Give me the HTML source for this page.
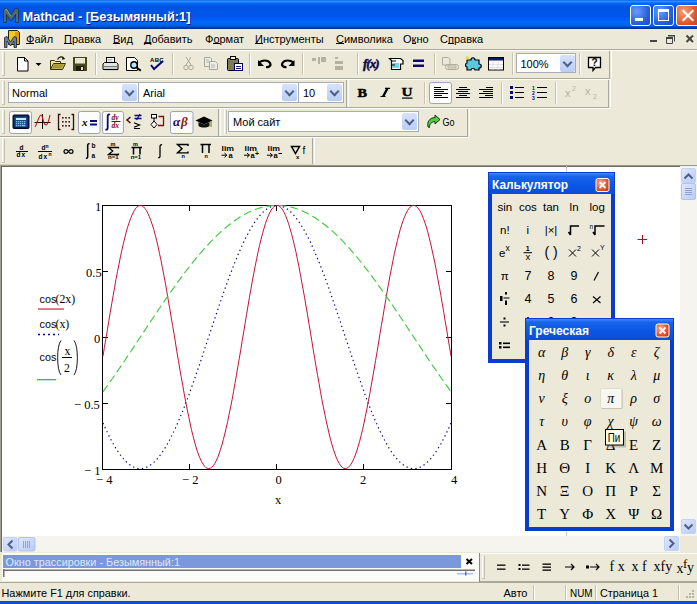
<!DOCTYPE html>
<html><head><meta charset="utf-8">
<style>
*{margin:0;padding:0;box-sizing:border-box}
html,body{width:697px;height:604px;overflow:hidden;background:#ECE9D8;font-family:"Liberation Sans",sans-serif;font-size:11px;color:#000}
.a{position:absolute}
svg{position:absolute;left:0;top:0;overflow:visible}
#title{left:0;top:0;width:697px;height:29px;background:linear-gradient(to bottom,#0058ee 0%,#3593ff 4%,#288eff 6%,#127dff 8%,#036ffc 10%,#0262ee 14%,#0057e5 20%,#0054e3 24%,#0055eb 56%,#005bf5 66%,#026afe 76%,#0062ef 86%,#0052d6 92%,#0040ab 94%,#003092 100%)}
#ttext{left:22.5px;top:9px;color:#fff;font-weight:bold;font-size:12.8px;white-space:nowrap;text-shadow:1px 1px 0 #0a1883}
.tb{top:5px;width:21px;height:21px;border:1px solid #fff;border-radius:3px;background:radial-gradient(circle at 30% 30%,#6a9cf8,#2a60e0 60%,#1a48c8)}
.mi{top:4px;white-space:nowrap;font-size:11px}
.u{position:relative}.u:after{content:"";position:absolute;left:0;right:0;top:9.5px;height:1px;background:#000}
.combo{background:#fff;border:1px solid #a5acb5}
.cbtn{position:absolute;width:15px;height:17px;background:linear-gradient(#d7e2fb,#b9cdf7);border-radius:2px}
.cbtn:after{content:"";position:absolute;left:4px;top:4px;width:5px;height:5px;border-right:2px solid #4d6185;border-bottom:2px solid #4d6185;transform:rotate(45deg)}
.ctext{position:absolute;white-space:nowrap;font-size:11px}
.pbtn{background:#fcfcfa;border:1px solid #a7a69c;border-radius:2px}
.serif{font-family:"Liberation Serif",serif}
.pal{background:#0b3ed8}
.pin{position:absolute;background:#ECE9D8}
.ptitle{position:absolute;left:0;top:0;right:0;height:22px;background:linear-gradient(#3a82f8,#1660ea 30%,#0c52e2 70%,#0a4ad8)}
.ptext{position:absolute;left:4px;top:5px;color:#fff;font-weight:bold;font-size:12px;white-space:nowrap}
.pclose{position:absolute;width:14px;height:13px;border:1px solid #fff;border-radius:2px;background:radial-gradient(circle at 35% 35%,#f0a080,#e05a30 60%,#c84418)}
.pclose:before,.pclose:after{content:"";position:absolute;left:5px;top:1px;width:2px;height:9px;background:#fff;transform:rotate(45deg)}
.pclose:after{transform:rotate(-45deg)}
.c{position:absolute;width:23px;height:23px;text-align:center;line-height:23px;font-size:13px;white-space:nowrap}
.g{font-family:"Liberation Serif",serif;font-style:italic;font-size:14px}
.G{font-family:"Liberation Serif",serif;font-size:15px}
.st{top:5px;font-size:11px;white-space:nowrap}
</style></head><body>
<!-- TITLE -->
<div id="title" class="a">
  <svg width="24" height="29"><path d="M3.5 22.5v-13l3-1.5l4.5 7l4.5-7l3 1.5v13h-3v-8l-4.5 6.5l-4.5-6.5v8z" fill="#4e6a72" stroke="#1e3038" stroke-width="0.8"/><path d="M5 10l1.5-0.8 4.5 7" stroke="#9ab0b8" stroke-width="0.8" fill="none"/></svg>
  <div id="ttext" class="a">Mathcad - [Безымянный:1]</div>
  <div class="a tb" style="left:630px"><div class="a" style="left:4px;top:12px;width:8px;height:3px;background:#fff"></div></div>
  <div class="a tb" style="left:653px"><div class="a" style="left:4px;top:3px;width:11px;height:12px;border:1px solid #fff;border-top-width:3px"></div></div>
  <div class="a tb" style="left:676px;width:24px;background:radial-gradient(circle at 30% 30%,#f3a07a,#e0552a 60%,#c8401a)"><div class="a" style="left:10px;top:2px;width:2px;height:15px;background:#fff;transform:rotate(45deg)"></div><div class="a" style="left:10px;top:2px;width:2px;height:15px;background:#fff;transform:rotate(-45deg)"></div></div>
</div>
<!-- MENU -->
<div class="a" style="left:0;top:29px;width:697px;height:20px;background:#ECE9D8">
  <svg width="24" height="20"><rect x="0" y="0" width="22" height="20" fill="#f4f2ea"/><path d="M8.5 1.5h9l2 2v12h-11z" fill="#f6c81a" stroke="#2a2000"/><rect x="15" y="3" width="4" height="12" fill="#e39a10"/><path d="M4.5 18.5v-10l2.5-1l3.5 5.5l3.5-5.5l2.5 1v10h-2.5v-6.5l-3.5 5l-3.5-5v6.5z" fill="#6f8090" stroke="#1a2430" stroke-width="0.8"/></svg>
  <div class="a mi" style="left:26px"><span class="u">Ф</span>айл</div>
  <div class="a mi" style="left:64px"><span class="u">П</span>равка</div>
  <div class="a mi" style="left:113px"><span class="u">В</span>ид</div>
  <div class="a mi" style="left:144px"><span class="u">Д</span>обавить</div>
  <div class="a mi" style="left:205px">Ф<span class="u">о</span>рмат</div>
  <div class="a mi" style="left:255px"><span class="u">И</span>нструменты</div>
  <div class="a mi" style="left:336px"><span class="u">С</span>имволика</div>
  <div class="a mi" style="left:403px">О<span class="u">к</span>но</div>
  <div class="a mi" style="left:440px">С<span class="u">п</span>равка</div>
  <svg width="697" height="20">
    <rect x="650" y="11" width="7" height="2" fill="#444"/>
    <path d="M666.5 8.5h6v6h-6z M668.5 6.5h6v6" fill="none" stroke="#444" stroke-width="1"/><path d="M666 8h7v2h-7z M668 6h7v1.5h-7z" fill="#444"/>
    <path d="M686.5 6.5l6.5 6.5M693 6.5l-6.5 6.5" stroke="#444" stroke-width="2"/>
  </svg>
</div>
<svg width="697" height="604" style="font-family:'Liberation Sans',sans-serif">
 <!-- etched band lines -->
 <g shape-rendering="crispEdges">
  <rect x="0" y="49" width="697" height="1" fill="#aca899"/>
  <rect x="0" y="50" width="697" height="1" fill="#fff"/>
  <rect x="0" y="78" width="610" height="1" fill="#aca899"/>
  <rect x="0" y="79" width="611" height="1" fill="#fff"/>
  <rect x="0" y="107" width="609" height="1" fill="#aca899"/>
  <rect x="0" y="108" width="610" height="1" fill="#fff"/>
  <rect x="0" y="136" width="468" height="1" fill="#aca899"/>
  <rect x="0" y="137" width="469" height="1" fill="#fff"/>
  <rect x="0" y="164" width="314" height="1" fill="#d8d4c4"/>
  <!-- band right edges -->
  <rect x="609" y="51" width="1" height="27" fill="#aca899"/><rect x="611" y="51" width="1" height="27" fill="#fff"/>
  <rect x="608" y="80" width="1" height="27" fill="#aca899"/><rect x="610" y="80" width="1" height="27" fill="#fff"/>
  <rect x="467" y="109" width="1" height="27" fill="#aca899"/><rect x="469" y="109" width="1" height="27" fill="#fff"/>
  <rect x="312" y="138" width="1" height="26" fill="#aca899"/><rect x="314" y="138" width="1" height="26" fill="#fff"/>
  <rect x="218" y="109" width="1" height="27" fill="#aca899"/><rect x="220" y="109" width="1" height="27" fill="#fff"/>
  <rect x="346" y="80" width="1" height="27" fill="#aca899"/><rect x="348" y="80" width="1" height="27" fill="#fff"/>
  <!-- grips -->
  <rect x="2" y="52" width="1" height="24" fill="#fff"/><rect x="4" y="52" width="1" height="24" fill="#c5c1ad"/><rect x="2" y="75" width="3" height="1" fill="#c5c1ad"/>
  <rect x="2" y="81" width="1" height="24" fill="#fff"/><rect x="4" y="81" width="1" height="24" fill="#c5c1ad"/><rect x="2" y="104" width="3" height="1" fill="#c5c1ad"/>
  <rect x="2" y="110" width="1" height="24" fill="#fff"/><rect x="4" y="110" width="1" height="24" fill="#c5c1ad"/><rect x="2" y="133" width="3" height="1" fill="#c5c1ad"/>
  <rect x="2" y="139" width="1" height="24" fill="#fff"/><rect x="4" y="139" width="1" height="24" fill="#c5c1ad"/><rect x="2" y="162" width="3" height="1" fill="#c5c1ad"/>
  <rect x="224" y="110" width="1" height="24" fill="#fff"/><rect x="226" y="110" width="1" height="24" fill="#c5c1ad"/>
  <rect x="482" y="555" width="1" height="24" fill="#fff"/><rect x="484" y="555" width="1" height="24" fill="#c5c1ad"/>
  <!-- separators band1 -->
  <g fill="#c5c1ad"><rect x="95" y="53" width="1" height="22"/><rect x="172" y="53" width="1" height="22"/><rect x="249" y="53" width="1" height="22"/><rect x="302" y="53" width="1" height="22"/><rect x="357" y="53" width="1" height="22"/><rect x="434" y="53" width="1" height="22"/><rect x="512" y="53" width="1" height="22"/><rect x="579" y="53" width="1" height="22"/>
  <rect x="424" y="82" width="1" height="22"/><rect x="501" y="82" width="1" height="22"/><rect x="555" y="82" width="1" height="22"/></g>
  <g fill="#fff"><rect x="96" y="53" width="1" height="22"/><rect x="173" y="53" width="1" height="22"/><rect x="250" y="53" width="1" height="22"/><rect x="303" y="53" width="1" height="22"/><rect x="358" y="53" width="1" height="22"/><rect x="435" y="53" width="1" height="22"/><rect x="513" y="53" width="1" height="22"/><rect x="580" y="53" width="1" height="22"/>
  <rect x="425" y="82" width="1" height="22"/><rect x="502" y="82" width="1" height="22"/><rect x="556" y="82" width="1" height="22"/></g>
 </g>

 <!-- ===== BAND 1 ICONS ===== -->
 <!-- new -->
 <path d="M17.5 57.5h7l3.5 3.5v10h-10.5z" fill="#fff" stroke="#000"/><path d="M24.5 57.5v3.5h3.5" fill="none" stroke="#000"/>
 <path d="M35.5 63h6l-3 3z" fill="#000"/>
 <!-- open -->
 <path d="M50.5 69.5v-9h4l1 1h5v2" fill="#f0e8a0" stroke="#3a3410"/>
 <path d="M50.5 69.5l3-6h12l-3 6z" fill="#d8c860" stroke="#3a3410"/>
 <path d="M51.8 68.6l2.3-4.3h10l-2.3 4.3z" fill="#a89838"/>
 <path d="M57.5 59.5c1.5-3 4.5-3.5 6.5-1" fill="none" stroke="#1a1a08" stroke-width="1.2"/><path d="M62.5 56.2l2.8 2.8-3.3 0.8z" fill="#1a1a08"/>
 <!-- save -->
 <rect x="73" y="57" width="14" height="14" fill="#474720"/>
 <rect x="75" y="58" width="10" height="5.5" fill="#e9e6d0"/>
 <rect x="76" y="66" width="8" height="5" fill="#1c1c08"/><rect x="81" y="67" width="2" height="3" fill="#e0e0d0"/>
 <!-- print -->
 <rect x="106.5" y="57.5" width="8" height="5" fill="#fff" stroke="#000"/>
 <path d="M107.5 59.5h5M107.5 61h5" stroke="#888" stroke-width="0.6"/>
 <path d="M104.5 62.5h12l1.5 1.5v5.5h-15v-5.5z" fill="#e4e4e4" stroke="#000"/>
 <rect x="104" y="66" width="13.5" height="1.2" fill="#777"/><path d="M104.5 69.5h13.5" stroke="#000" stroke-width="1.2"/>
 <!-- preview -->
 <path d="M126.5 57.5h8l3 3v10h-11z" fill="#fff" stroke="#000"/>
 <circle cx="134" cy="65" r="3.2" fill="#b8e0f0" stroke="#000" stroke-width="1.4"/><path d="M136.3 67.3l4.5 3.5" stroke="#000" stroke-width="2"/>
 <!-- spell -->
 <text x="150" y="62" font-size="6" font-weight="bold" fill="#000" letter-spacing="0.3">ABC</text>
 <path d="M151 65l3 4 9-8" fill="none" stroke="#000080" stroke-width="2"/>
 <!-- cut grey -->
 <g fill="none" stroke="#a9a898" stroke-width="1"><path d="M186 57l5 8M191 57l-5 8"/><circle cx="186" cy="67.5" r="2.2"/><circle cx="191" cy="67.5" r="2.2"/></g>
 <!-- copy grey -->
 <g fill="#ecebe4" stroke="#a9a898"><path d="M204.5 57.5h6l1 1v8h-7z"/><path d="M209.5 61.5h6l2 2v6h-8z"/></g>
 <g stroke="#b9b8a8"><path d="M206 60h3M206 62h3M211 65h4M211 67h4"/></g>
 <!-- paste -->
 <rect x="227.5" y="58.5" width="11" height="12" rx="1" fill="#7e7a5c" stroke="#000"/>
 <rect x="230.5" y="56.5" width="5" height="3" fill="#f8f4c0" stroke="#000"/>
 <rect x="234.5" y="63.5" width="8" height="7" fill="#fff" stroke="#000060"/><path d="M236 66.5h5M236 68.5h5" stroke="#000060" stroke-width="0.9"/>
 <!-- undo / redo -->
 <path d="M259 62.5c3-2.5 9-3 11 0.5c1.5 2.5-1 4.5-4 4" fill="none" stroke="#000" stroke-width="2.2"/><path d="M258 60v6h6z" fill="#000"/>
 <path d="M293.5 62.5c-3-2.5-9-3-11 0.5c-1.5 2.5 1 4.5 4 4" fill="none" stroke="#000" stroke-width="2.2"/><path d="M294.5 60v6h-6z" fill="#000"/>
 <!-- grey align icons -->
 <g fill="#b3b1a2"><rect x="312" y="58" width="4" height="3"/><rect x="318" y="57" width="2" height="7"/><rect x="321" y="57" width="5" height="5"/>
 <rect x="335" y="57" width="3" height="2"/><rect x="335" y="61" width="8" height="3"/><rect x="335" y="66" width="8" height="4"/></g>
 <!-- f(x) -->
 <text x="363" y="68" font-family="Liberation Serif" font-style="italic" font-weight="bold" font-size="13" fill="#0a0a50" stroke="#0a0a50" stroke-width="0.5" letter-spacing="-1">f(x)</text>
 <!-- beaker -->
 <path d="M389.5 58.5h11l2.5 2v3.5l-2.5 0v5.5h-9v-9z" fill="#fff" stroke="#000" stroke-width="1.2"/>
 <rect x="392" y="63" width="7" height="5" fill="#7ad0e8"/><path d="M392 61h4M392 65h3" stroke="#000"/>
 <!-- = -->
 <rect x="413" y="59.5" width="11" height="2.5" fill="#0a0a70"/><rect x="413" y="64.5" width="11" height="2.5" fill="#0a0a70"/>
 <!-- grey component -->
 <g fill="none" stroke="#aeac9c"><path d="M442.5 57.5h6l1.5 1.5v6h-7.5z"/><rect x="445.5" y="64.5" width="13" height="5" rx="2"/><rect x="448" y="66" width="8" height="2"/></g>
 <!-- puzzle -->
 <path d="M467 60h4c0-3 4-3 4 0h4v4c3 0 3 4 0 4v2h-4c0-2-4-2-4 0h-4v-3c-2 0-2-4 0-4z" fill="#5cc8e0" stroke="#000" stroke-width="1.2"/>
 <path d="M466 57l1 3M468 56v3" stroke="#e8d030" stroke-width="1.3"/>
 <!-- window -->
 <rect x="488.5" y="57.5" width="15" height="12.5" fill="#fff" stroke="#000"/><rect x="489" y="58" width="14" height="2.5" fill="#0a1a6a"/>
 <path d="M489 64.5h14M489 67.5h14M493 61v9M498 61v9" stroke="#d8d8e8" stroke-width="0.8"/>
 <!-- help -->
 <path d="M588.5 57.5h12v10h-5l-2.5 3v-3h-4.5z" fill="#fffff4" stroke="#000" stroke-width="1.3"/>
 <text x="591.5" y="66" font-size="10" font-weight="bold" fill="#000">?</text>

 <!-- ===== BAND 2 ICONS ===== -->
 <text x="357.5" y="96.8" font-family="Liberation Serif" font-weight="bold" font-size="13" fill="#000" stroke="#000" stroke-width="0.5" textLength="9.5" lengthAdjust="spacingAndGlyphs">B</text>
 <path d="M385 88.3h5M380.5 96.5h5M388 88.3l-4.5 8.2" stroke="#000" stroke-width="1.2" fill="none"/><path d="M387.5 88.3l-4.5 8.2" stroke="#000" stroke-width="2.2"/>
 <text x="401.5" y="96" font-family="Liberation Serif" font-weight="bold" font-size="12" fill="#000" stroke="#000" stroke-width="0.4" textLength="11" lengthAdjust="spacingAndGlyphs">U</text>
 <rect x="402" y="97.5" width="10.5" height="1.2" fill="#000"/>
 <rect x="429.5" y="82.5" width="22" height="21" rx="2" fill="#fcfcfa" stroke="#9ea4b8"/>
 <g fill="#000">
  <rect x="434" y="87" width="7" height="1"/><rect x="434" y="89" width="14" height="1"/><rect x="434" y="91" width="10" height="1"/><rect x="434" y="93" width="14" height="1"/><rect x="434" y="95" width="8" height="1"/><rect x="434" y="97" width="14" height="1"/>
  <rect x="459" y="87" width="8" height="1"/><rect x="456" y="89" width="14" height="1"/><rect x="458" y="91" width="10" height="1"/><rect x="456" y="93" width="14" height="1"/><rect x="459" y="95" width="8" height="1"/><rect x="456" y="97" width="14" height="1"/>
  <rect x="486" y="87" width="7" height="1"/><rect x="479" y="89" width="14" height="1"/><rect x="483" y="91" width="10" height="1"/><rect x="479" y="93" width="14" height="1"/><rect x="485" y="95" width="8" height="1"/><rect x="479" y="97" width="14" height="1"/>
 </g>
 <g fill="#0a0a6a"><rect x="510" y="86" width="3" height="3"/><rect x="510" y="91" width="3" height="3"/><rect x="510" y="96" width="3" height="3"/></g>
 <g fill="#000"><rect x="515" y="87" width="9" height="1"/><rect x="515" y="92" width="9" height="1"/><rect x="515" y="97" width="9" height="1"/>
 <rect x="537" y="87" width="10" height="1"/><rect x="537" y="92" width="10" height="1"/><rect x="537" y="97" width="10" height="1"/></g>
 <text x="532" y="90" font-size="5" font-weight="bold" fill="#0a0a6a">1</text><text x="532" y="95" font-size="5" font-weight="bold" fill="#0a0a6a">2</text><text x="532" y="100" font-size="5" font-weight="bold" fill="#0a0a6a">3</text>
 <text x="565" y="97" font-size="11" fill="#b5b3a5">x</text><text x="572" y="91" font-size="7" fill="#b5b3a5">2</text>
 <text x="585" y="95" font-size="11" fill="#b5b3a5">x</text><text x="593" y="99" font-size="7" fill="#b5b3a5">2</text>

 <!-- ===== BAND 3 ICONS ===== -->
 <rect x="9.5" y="111.5" width="22" height="22" rx="2" fill="#fcfcfa" stroke="#9ea4b8"/>
 <rect x="13" y="115" width="16" height="13.5" rx="1" fill="#081c50" stroke="#030a28"/>
 <rect x="14.5" y="116.5" width="13" height="10.5" fill="#1a4c84"/>
 <rect x="16" y="118" width="10" height="2" fill="#c8ecf4"/>
 <g fill="#70c8d8"><rect x="16" y="121" width="1.3" height="1.3"/><rect x="18" y="121" width="1.3" height="1.3"/><rect x="20" y="121" width="1.3" height="1.3"/><rect x="22" y="121" width="1.3" height="1.3"/><rect x="24" y="121" width="1.3" height="1.3"/>
 <rect x="16" y="123" width="1.3" height="1.3"/><rect x="18" y="123" width="1.3" height="1.3"/><rect x="20" y="123" width="1.3" height="1.3"/><rect x="22" y="123" width="1.3" height="1.3"/><rect x="24" y="123" width="1.3" height="1.3"/>
 <rect x="16" y="125" width="1.3" height="1.3"/><rect x="18" y="125" width="1.3" height="1.3"/><rect x="20" y="125" width="1.3" height="1.3"/><rect x="22" y="125" width="3.3" height="1.3"/></g>
 <!-- graph -->
 <path d="M34.5 122.5h16M42.5 114v15" stroke="#000" stroke-width="1"/>
 <path d="M35 127c2-3 4-12 6-12c2 0 2 10 5 10c2 0 3-6 4-10" fill="none" stroke="#d01818" stroke-width="1.1"/>
 <!-- matrix -->
 <path d="M60.5 114.5h-2v15h2M71.5 114.5h2v15h-2" fill="none" stroke="#301010" stroke-width="1.3"/>
 <g fill="#401010"><rect x="62" y="117" width="1.6" height="1.6"/><rect x="65.2" y="117" width="1.6" height="1.6"/><rect x="68.4" y="117" width="1.6" height="1.6"/><rect x="62" y="121" width="1.6" height="1.6"/><rect x="65.2" y="121" width="1.6" height="1.6"/><rect x="68.4" y="121" width="1.6" height="1.6"/><rect x="62" y="125" width="1.6" height="1.6"/><rect x="65.2" y="125" width="1.6" height="1.6"/><rect x="68.4" y="125" width="1.6" height="1.6"/></g>
 <!-- x= -->
 <rect x="78.5" y="111.5" width="21.5" height="22" rx="2" fill="#fcfcfa" stroke="#9ea4b8"/>
 <text x="82" y="125.5" font-family="Liberation Serif" font-style="italic" font-weight="bold" font-size="11" fill="#000">x</text>
 <rect x="90" y="120" width="7" height="2" fill="#0a0a70"/><rect x="90" y="123.5" width="7" height="2" fill="#0a0a70"/>
 <!-- integral -->
 <rect x="102.5" y="111.5" width="21" height="22" rx="2" fill="#fcfcfa" stroke="#9ea4b8"/>
 <path d="M110 114.8c-1.2-0.8-2.3-0.2-2.3 1.5v11.5c0 1.7-1 2.3-2.2 1.5" fill="none" stroke="#0a0a70" stroke-width="1.8"/>
 <text x="111.5" y="120.3" font-family="Liberation Serif" font-style="italic" font-weight="bold" font-size="7.5" fill="#800a0a">dy</text>
 <rect x="111.5" y="121" width="9" height="1" fill="#800a0a"/>
 <text x="111.5" y="127.8" font-family="Liberation Serif" font-style="italic" font-weight="bold" font-size="7.5" fill="#800a0a">dx</text>
 <!-- relational -->
 <path d="M130.5 117l-3.5 3l3.5 3" fill="none" stroke="#401010" stroke-width="1.5"/>
 <path d="M134.5 115.5h7M134.5 118.5h7" stroke="#0a0a70" stroke-width="1.6"/><path d="M140 114l-3.5 6" stroke="#0a0a70" stroke-width="1.1"/>
 <path d="M134 122.8l5.5 2.2l-5.5 2.2M134 128.5h6" fill="none" stroke="#000" stroke-width="1.2"/>
 <!-- programming -->
 <rect x="151.5" y="114.5" width="5" height="3.5" fill="#fff" stroke="#000"/>
 <path d="M154 118v3" stroke="#000"/><path d="M154 121l3 3.5l-3 3.5l-3-3.5z" fill="#fff" stroke="#000"/>
 <path d="M158 125.5h5.5v-9h-5" fill="none" stroke="#801010" stroke-width="1.3"/>
 <!-- alpha beta -->
 <rect x="170.5" y="111.5" width="22.5" height="22" rx="2" fill="#fcfcfa" stroke="#9ea4b8"/>
 <text x="173" y="126" font-family="Liberation Serif" font-style="italic" font-weight="bold" font-size="13" fill="#0a0a70">α</text>
 <text x="181" y="126" font-family="Liberation Serif" font-style="italic" font-weight="bold" font-size="13" fill="#a01010">β</text>
 <!-- cap -->
 <path d="M195.5 120.5l8.5-4l8.5 4l-8.5 4z" fill="#000"/><path d="M198.5 122v4c3 2 8 2 11 0v-4l-5.5 2.5z" fill="#111"/>
 <path d="M211 121v6" stroke="#8a8a20" stroke-width="1.2"/>
 <!-- site combo -->
 <!-- Go -->
 <path d="M428 127c-1-5 1-9 7-9.5v-2.5l5 4.5l-5 4.5v-2.5c-4 0.5-5.5 2.5-5.5 6z" fill="#58c848" stroke="#0a3a08" stroke-width="1"/>
 <text x="442.5" y="126.3" font-size="10.5" fill="#000" textLength="12" lengthAdjust="spacingAndGlyphs">Go</text>

 <!-- ===== BAND 4 ICONS ===== -->
 <g font-family="Liberation Sans" font-weight="bold" fill="#000" font-size="6.5">
  <text x="19.5" y="150">d</text><rect x="16" y="151" width="12" height="1"/><text x="16.5" y="157.3">d</text><text x="21.5" y="157.3">x</text>
  <text x="41.5" y="150">d</text><text x="45.5" y="147.5" font-size="5">n</text><rect x="38" y="151" width="14" height="1"/><text x="38.5" y="158.5">d</text><text x="43.5" y="158.5">x</text><text x="48.5" y="155.5" font-size="5">n</text>
  <text x="91.5" y="148.2" font-size="6.5">b</text><text x="91.5" y="157.8" font-size="6.5">a</text>
  <text x="110.5" y="145.6" font-size="5.5">m</text><text x="108" y="158.8" font-size="5.5" textLength="10.5" lengthAdjust="spacingAndGlyphs">n=1</text>
  <text x="133" y="145.6" font-size="5.5">m</text><text x="130.7" y="158.8" font-size="5.5" textLength="10.5" lengthAdjust="spacingAndGlyphs">n=1</text>
  <text x="181.5" y="157.5" font-size="5.5">n</text>
  <text x="204.5" y="157.5" font-size="5.5">n</text>
  <text x="221.5" y="150.5" font-size="7.5" textLength="12.5" lengthAdjust="spacingAndGlyphs">lim</text><text x="228.5" y="157.8" font-size="7.5">a</text>
  <text x="244.5" y="150.5" font-size="7.5" textLength="12.5" lengthAdjust="spacingAndGlyphs">lim</text><text x="250.5" y="157.8" font-size="7.5">a</text><text x="255" y="155.5" font-size="7">+</text>
  <text x="267.5" y="150.5" font-size="7.5" textLength="12.5" lengthAdjust="spacingAndGlyphs">lim</text><text x="273.5" y="157.8" font-size="7.5">a</text><rect x="278.5" y="153" width="3.5" height="1"/>
  <text x="302.5" y="153.5" font-size="10" font-weight="normal">f</text><text x="296" y="158.5" font-size="6">x</text>
 </g>
 <path d="M64 151.5c0-2.5 3-2.5 4.5 0c1.5 2.5 4.5 2.5 4.5 0c0-2.5-3-2.5-4.5 0c-1.5 2.5-4.5 2.5-4.5 0z" fill="none" stroke="#000" stroke-width="1.3"/>
 <path d="M89.5 144c-1-0.6-1.8 0-1.8 1.5v11c0 1.5-0.7 2-1.7 1.5" fill="none" stroke="#000" stroke-width="1.5"/>
 <path d="M118.5 148.5v-1h-10l4.2 3.5l-4.2 3.5h10v-1" fill="none" stroke="#000" stroke-width="1.3"/>
 <path d="M131.5 147.5h10.5M133.5 147.5v7M140 147.5v7" fill="none" stroke="#000" stroke-width="1.5"/>
 <path d="M162 145c-1-0.7-2 0-2 1.5v9.5c0 1.5-0.8 2-1.8 1.5" fill="none" stroke="#000" stroke-width="1.3"/>
 <path d="M188 146v-1.5h-10.5l4.5 4.2l-4.5 4.2h10.5v-1.5" fill="none" stroke="#000" stroke-width="1.4"/>
 <path d="M200.5 144.5h10.5M202.5 144.5v8.5M209 144.5v8.5" fill="none" stroke="#000" stroke-width="1.5"/>
 <path d="M291.5 146.5h8l-4 7z" fill="none" stroke="#000" stroke-width="1.5"/><path d="M221.5 155.2h5.5M224.5 153l2.3 2.2l-2.3 2.2M244 155.2h5.5M247 153l2.3 2.2l-2.3 2.2M267 155.2h5.5M270 153l2.3 2.2l-2.3 2.2" fill="none" stroke="#000" stroke-width="1"/>
</svg>
<div class="a combo" style="left:516px;top:53px;width:60px;height:20px"><div class="ctext" style="left:3.5px;top:4px;font-size:11px">100%</div><div class="cbtn" style="left:43px;top:1px"></div></div>
<div class="a combo" style="left:8px;top:82px;width:131px;height:21px"><div class="ctext" style="left:3px;top:4px">Normal</div><div class="cbtn" style="left:113px;top:1px"></div></div>
<div class="a combo" style="left:138px;top:82px;width:161px;height:21px"><div class="ctext" style="left:4px;top:4px">Arial</div><div class="cbtn" style="left:143px;top:1px"></div></div>
<div class="a combo" style="left:298px;top:82px;width:46px;height:21px"><div class="ctext" style="left:4px;top:4px">10</div><div class="cbtn" style="left:28px;top:1px"></div></div>
<div class="a combo" style="left:228px;top:111px;width:191px;height:21px"><div class="ctext" style="left:4px;top:4px">Мой сайт</div><div class="cbtn" style="left:173px;top:1px"></div></div>

<div class="a" style="left:0;top:165px;width:697px;height:1px;background:#9a978a"></div><div class="a" style="left:0;top:166px;width:680px;height:1px;background:#716f64"></div>
<div class="a" style="left:0;top:166px;width:1px;height:386px;background:#a2a199"></div><div class="a" style="left:1px;top:166px;width:1px;height:386px;background:#666660"></div>
<div class="a" style="left:2px;top:167px;width:678px;height:369px;background:#fff"></div>
<svg width="697" height="604">
 <g shape-rendering="crispEdges" fill="#000">
  <rect x="103" y="205" width="349" height="1"/>
  <rect x="103" y="469" width="349" height="1"/>
  <rect x="102" y="205" width="1" height="265"/>
  <rect x="451" y="205" width="1" height="265"/>
  <!-- ticks -->
  <rect x="189" y="206" width="1" height="5"/><rect x="276" y="206" width="1" height="5"/><rect x="363" y="206" width="1" height="5"/>
  <rect x="189" y="464" width="1" height="5"/><rect x="276" y="464" width="1" height="5"/><rect x="363" y="464" width="1" height="5"/>
  <rect x="103" y="271" width="5" height="1"/><rect x="103" y="337" width="5" height="1"/><rect x="103" y="403" width="5" height="1"/>
  <rect x="446" y="271" width="5" height="1"/><rect x="446" y="337" width="5" height="1"/><rect x="446" y="403" width="5" height="1"/>
 </g>
 <path d="M103.0 356.1 104.4 347.4 105.9 338.7 107.4 329.9 108.8 321.2 110.2 312.5 111.7 303.9 113.2 295.5 114.6 287.3 116.0 279.3 117.5 271.5 119.0 264.1 120.4 256.9 121.9 250.2 123.3 243.8 124.8 237.8 126.2 232.2 127.6 227.2 129.1 222.6 130.6 218.5 132.0 215.0 133.5 211.9 134.9 209.5 136.3 207.6 137.8 206.3 139.2 205.6 140.7 205.4 142.2 205.9 143.6 206.9 145.1 208.5 146.5 210.6 147.9 213.4 149.4 216.7 150.8 220.5 152.3 224.8 153.8 229.6 155.2 234.9 156.7 240.7 158.1 246.9 159.5 253.5 161.0 260.4 162.4 267.7 163.9 275.3 165.4 283.2 166.8 291.3 168.2 299.7 169.7 308.2 171.1 316.8 172.6 325.5 174.1 334.2 175.5 343.0 176.9 351.8 178.4 360.4 179.8 369.0 181.3 377.4 182.8 385.7 184.2 393.7 185.6 401.5 187.1 409.0 188.6 416.2 190.0 423.0 191.4 429.5 192.9 435.5 194.4 441.1 195.8 446.2 197.2 450.9 198.7 455.0 200.2 458.6 201.6 461.7 203.1 464.2 204.5 466.2 205.9 467.6 207.4 468.4 208.8 468.6 210.3 468.2 211.8 467.3 213.2 465.8 214.7 463.7 216.1 461.0 217.6 457.8 219.0 454.0 220.4 449.8 221.9 445.0 223.3 439.7 224.8 434.0 226.2 427.9 227.7 421.4 229.1 414.4 230.6 407.2 232.1 399.6 233.5 391.8 234.9 383.7 236.4 375.4 237.8 366.9 239.3 358.3 240.8 349.6 242.2 340.8 243.7 332.1 245.1 323.3 246.5 314.6 248.0 306.0 249.4 297.6 250.9 289.3 252.3 281.2 253.8 273.4 255.2 265.9 256.7 258.7 258.1 251.8 259.6 245.3 261.1 239.2 262.5 233.6 264.0 228.4 265.4 223.7 266.9 219.5 268.3 215.8 269.8 212.6 271.2 210.1 272.6 208.0 274.1 206.6 275.6 205.7 277.0 205.4 278.4 205.7 279.9 206.6 281.4 208.0 282.8 210.1 284.2 212.6 285.7 215.8 287.1 219.5 288.6 223.7 290.0 228.4 291.5 233.6 292.9 239.2 294.4 245.3 295.9 251.8 297.3 258.7 298.8 265.9 300.2 273.4 301.6 281.2 303.1 289.3 304.6 297.6 306.0 306.0 307.5 314.6 308.9 323.3 310.4 332.1 311.8 340.8 313.2 349.6 314.7 358.3 316.1 366.9 317.6 375.4 319.1 383.7 320.5 391.8 321.9 399.6 323.4 407.2 324.9 414.4 326.3 421.4 327.8 427.9 329.2 434.0 330.6 439.7 332.1 445.0 333.5 449.8 335.0 454.0 336.4 457.8 337.9 461.0 339.4 463.7 340.8 465.8 342.2 467.3 343.7 468.2 345.1 468.6 346.6 468.4 348.1 467.6 349.5 466.2 351.0 464.2 352.4 461.7 353.9 458.6 355.3 455.0 356.8 450.9 358.2 446.2 359.7 441.1 361.1 435.5 362.6 429.5 364.0 423.0 365.4 416.2 366.9 409.0 368.3 401.5 369.8 393.7 371.2 385.7 372.7 377.4 374.1 369.0 375.6 360.4 377.1 351.8 378.5 343.0 379.9 334.2 381.4 325.5 382.9 316.8 384.3 308.2 385.8 299.7 387.2 291.3 388.6 283.2 390.1 275.3 391.6 267.7 393.0 260.4 394.4 253.5 395.9 246.9 397.4 240.7 398.8 234.9 400.2 229.6 401.7 224.8 403.2 220.5 404.6 216.7 406.1 213.4 407.5 210.6 408.9 208.5 410.4 206.9 411.8 205.9 413.3 205.4 414.8 205.6 416.2 206.3 417.6 207.6 419.1 209.5 420.6 211.9 422.0 215.0 423.4 218.5 424.9 222.6 426.4 227.2 427.8 232.2 429.2 237.8 430.7 243.8 432.1 250.2 433.6 256.9 435.1 264.1 436.5 271.5 437.9 279.3 439.4 287.3 440.9 295.5 442.3 303.9 443.8 312.5 445.2 321.2 446.7 329.9 448.1 338.7 449.6 347.4 451.0 356.1" fill="none" stroke="#c41236" stroke-width="1"/>
 <path d="M103.0 423.0 104.4 426.3 105.9 429.5 107.4 432.5 108.8 435.5 110.2 438.4 111.7 441.1 113.2 443.7 114.6 446.2 116.0 448.6 117.5 450.9 119.0 453.0 120.4 455.0 121.9 456.9 123.3 458.6 124.8 460.2 126.2 461.7 127.6 463.0 129.1 464.2 130.6 465.3 132.0 466.2 133.5 467.0 134.9 467.6 136.3 468.0 137.8 468.4 139.2 468.6 140.7 468.6 142.2 468.5 143.6 468.2 145.1 467.8 146.5 467.3 147.9 466.6 149.4 465.8 150.8 464.8 152.3 463.7 153.8 462.4 155.2 461.0 156.7 459.5 158.1 457.8 159.5 456.0 161.0 454.0 162.4 452.0 163.9 449.8 165.4 447.4 166.8 445.0 168.2 442.4 169.7 439.7 171.1 436.9 172.6 434.0 174.1 431.0 175.5 427.9 176.9 424.7 178.4 421.4 179.8 417.9 181.3 414.4 182.8 410.9 184.2 407.2 185.6 403.4 187.1 399.6 188.6 395.7 190.0 391.8 191.4 387.7 192.9 383.7 194.4 379.5 195.8 375.4 197.2 371.2 198.7 366.9 200.2 362.6 201.6 358.3 203.1 354.0 204.5 349.6 205.9 345.2 207.4 340.8 208.8 336.5 210.3 332.1 211.8 327.7 213.2 323.3 214.7 319.0 216.1 314.6 217.6 310.3 219.0 306.0 220.4 301.8 221.9 297.6 223.3 293.4 224.8 289.3 226.2 285.3 227.7 281.2 229.1 277.3 230.6 273.4 232.1 269.6 233.5 265.9 234.9 262.2 236.4 258.7 237.8 255.2 239.3 251.8 240.8 248.5 242.2 245.3 243.7 242.2 245.1 239.2 246.5 236.3 248.0 233.6 249.4 230.9 250.9 228.4 252.3 226.0 253.8 223.7 255.2 221.5 256.7 219.5 258.1 217.6 259.6 215.8 261.1 214.1 262.5 212.6 264.0 211.3 265.4 210.1 266.9 209.0 268.3 208.0 269.8 207.2 271.2 206.6 272.6 206.1 274.1 205.7 275.6 205.5 277.0 205.4 278.4 205.5 279.9 205.7 281.4 206.1 282.8 206.6 284.2 207.2 285.7 208.0 287.1 209.0 288.6 210.1 290.0 211.3 291.5 212.6 292.9 214.1 294.4 215.8 295.9 217.6 297.3 219.5 298.8 221.5 300.2 223.7 301.6 226.0 303.1 228.4 304.6 230.9 306.0 233.6 307.5 236.3 308.9 239.2 310.4 242.2 311.8 245.3 313.2 248.5 314.7 251.8 316.1 255.2 317.6 258.7 319.1 262.2 320.5 265.9 321.9 269.6 323.4 273.4 324.9 277.3 326.3 281.2 327.8 285.3 329.2 289.3 330.6 293.4 332.1 297.6 333.5 301.8 335.0 306.0 336.4 310.3 337.9 314.6 339.4 319.0 340.8 323.3 342.2 327.7 343.7 332.1 345.1 336.5 346.6 340.8 348.1 345.2 349.5 349.6 351.0 354.0 352.4 358.3 353.9 362.6 355.3 366.9 356.8 371.2 358.2 375.4 359.7 379.5 361.1 383.7 362.6 387.7 364.0 391.8 365.4 395.7 366.9 399.6 368.3 403.4 369.8 407.2 371.2 410.9 372.7 414.4 374.1 417.9 375.6 421.4 377.1 424.7 378.5 427.9 379.9 431.0 381.4 434.0 382.9 436.9 384.3 439.7 385.8 442.4 387.2 445.0 388.6 447.4 390.1 449.8 391.6 452.0 393.0 454.0 394.4 456.0 395.9 457.8 397.4 459.5 398.8 461.0 400.2 462.4 401.7 463.7 403.2 464.8 404.6 465.8 406.1 466.6 407.5 467.3 408.9 467.8 410.4 468.2 411.8 468.5 413.3 468.6 414.8 468.6 416.2 468.4 417.6 468.0 419.1 467.6 420.6 467.0 422.0 466.2 423.4 465.3 424.9 464.2 426.4 463.0 427.8 461.7 429.2 460.2 430.7 458.6 432.1 456.9 433.6 455.0 435.1 453.0 436.5 450.9 437.9 448.6 439.4 446.2 440.9 443.7 442.3 441.1 443.8 438.4 445.2 435.5 446.7 432.5 448.1 429.5 449.6 426.3 451.0 423.0" fill="none" stroke="#000088" stroke-width="1.2" stroke-dasharray="1.3 3.2"/>
 <path d="M103.0 391.8 104.4 389.8 105.9 387.7 107.4 385.7 108.8 383.7 110.2 381.6 111.7 379.5 113.2 377.5 114.6 375.4 116.0 373.3 117.5 371.2 119.0 369.0 120.4 366.9 121.9 364.8 123.3 362.6 124.8 360.5 126.2 358.3 127.6 356.1 129.1 354.0 130.6 351.8 132.0 349.6 133.5 347.4 134.9 345.2 136.3 343.0 137.8 340.8 139.2 338.6 140.7 336.5 142.2 334.3 143.6 332.1 145.1 329.9 146.5 327.7 147.9 325.5 149.4 323.3 150.8 321.1 152.3 319.0 153.8 316.8 155.2 314.6 156.7 312.5 158.1 310.3 159.5 308.2 161.0 306.0 162.4 303.9 163.9 301.8 165.4 299.7 166.8 297.6 168.2 295.5 169.7 293.4 171.1 291.4 172.6 289.3 174.1 287.3 175.5 285.3 176.9 283.2 178.4 281.2 179.8 279.3 181.3 277.3 182.8 275.4 184.2 273.4 185.6 271.5 187.1 269.6 188.6 267.8 190.0 265.9 191.4 264.1 192.9 262.2 194.4 260.5 195.8 258.7 197.2 256.9 198.7 255.2 200.2 253.5 201.6 251.8 203.1 250.1 204.5 248.5 205.9 246.9 207.4 245.3 208.8 243.8 210.3 242.2 211.8 240.7 213.2 239.2 214.7 237.8 216.1 236.3 217.6 234.9 219.0 233.6 220.4 232.2 221.9 230.9 223.3 229.6 224.8 228.4 226.2 227.2 227.7 226.0 229.1 224.8 230.6 223.7 232.1 222.6 233.5 221.5 234.9 220.5 236.4 219.5 237.8 218.5 239.3 217.6 240.8 216.7 242.2 215.8 243.7 215.0 245.1 214.1 246.5 213.4 248.0 212.6 249.4 211.9 250.9 211.3 252.3 210.6 253.8 210.1 255.2 209.5 256.7 209.0 258.1 208.5 259.6 208.0 261.1 207.6 262.5 207.2 264.0 206.9 265.4 206.6 266.9 206.3 268.3 206.1 269.8 205.9 271.2 205.7 272.6 205.6 274.1 205.5 275.6 205.4 277.0 205.4 278.4 205.4 279.9 205.5 281.4 205.6 282.8 205.7 284.2 205.9 285.7 206.1 287.1 206.3 288.6 206.6 290.0 206.9 291.5 207.2 292.9 207.6 294.4 208.0 295.9 208.5 297.3 209.0 298.8 209.5 300.2 210.1 301.6 210.6 303.1 211.3 304.6 211.9 306.0 212.6 307.5 213.4 308.9 214.1 310.4 215.0 311.8 215.8 313.2 216.7 314.7 217.6 316.1 218.5 317.6 219.5 319.1 220.5 320.5 221.5 321.9 222.6 323.4 223.7 324.9 224.8 326.3 226.0 327.8 227.2 329.2 228.4 330.6 229.6 332.1 230.9 333.5 232.2 335.0 233.6 336.4 234.9 337.9 236.3 339.4 237.8 340.8 239.2 342.2 240.7 343.7 242.2 345.1 243.8 346.6 245.3 348.1 246.9 349.5 248.5 351.0 250.1 352.4 251.8 353.9 253.5 355.3 255.2 356.8 256.9 358.2 258.7 359.7 260.5 361.1 262.2 362.6 264.1 364.0 265.9 365.4 267.8 366.9 269.6 368.3 271.5 369.8 273.4 371.2 275.4 372.7 277.3 374.1 279.3 375.6 281.2 377.1 283.2 378.5 285.3 379.9 287.3 381.4 289.3 382.9 291.4 384.3 293.4 385.8 295.5 387.2 297.6 388.6 299.7 390.1 301.8 391.6 303.9 393.0 306.0 394.4 308.2 395.9 310.3 397.4 312.5 398.8 314.6 400.2 316.8 401.7 319.0 403.2 321.1 404.6 323.3 406.1 325.5 407.5 327.7 408.9 329.9 410.4 332.1 411.8 334.3 413.3 336.5 414.8 338.6 416.2 340.8 417.6 343.0 419.1 345.2 420.6 347.4 422.0 349.6 423.4 351.8 424.9 354.0 426.4 356.1 427.8 358.3 429.2 360.5 430.7 362.6 432.1 364.8 433.6 366.9 435.1 369.0 436.5 371.2 437.9 373.3 439.4 375.4 440.9 377.5 442.3 379.5 443.8 381.6 445.2 383.7 446.7 385.7 448.1 387.7 449.6 389.8 451.0 391.8" fill="none" stroke="#40c840" stroke-width="1.15" stroke-dasharray="8 4"/>
 <g font-family="Liberation Serif" font-size="12.5" fill="#000">
  <text x="95" y="211" >1</text>
  <text x="86" y="276.5">0.5</text>
  <text x="94" y="343">0</text>
  <text x="74" y="409">− 0.5</text>
  <text x="84" y="474.5">− 1</text>
  <text x="96" y="483.5">− 4</text>
  <text x="182" y="483.5">− 2</text>
  <text x="275.5" y="483.5">0</text>
  <text x="360" y="483.5">2</text>
  <text x="451" y="483.5">4</text>
  <text x="275" y="503.5">x</text>
 </g>
 <!-- legend -->
 <g font-size="12" fill="#000">
  <text x="39.5" y="303" font-family="Liberation Sans" font-size="10.8">cos</text><text x="55.5" y="303" font-family="Liberation Serif" font-size="11.8">(2x)</text>
  <text x="39.5" y="328" font-family="Liberation Sans" font-size="10.8">cos</text><text x="55.5" y="328" font-family="Liberation Serif" font-size="11.8">(x)</text>
  <text x="39.5" y="361" font-family="Liberation Sans" font-size="10.8">cos</text>
  <text x="64.5" y="354.5" font-family="Liberation Serif" font-size="11.8">x</text>
  <text x="64" y="372" font-family="Liberation Serif" font-size="11.8">2</text>
 </g>
 <rect x="62" y="357" width="10" height="1" fill="#000"/>
 <path d="M61 340.5c-4.5 5-4.5 29.5 0 34.5M74 340.5c4.5 5 4.5 29.5 0 34.5" fill="none" stroke="#000" stroke-width="0.9"/>
 <rect x="38" y="308.5" width="26" height="1.1" fill="#c41236"/>
 <path d="M38 334.5h21" stroke="#000090" stroke-width="1.3" stroke-dasharray="2 3"/>
 <rect x="37" y="379" width="19" height="1.3" fill="#28c828"/>
 <!-- red cursor cross -->
 <path d="M642.5 235v9M637.5 239.5h9.5" stroke="#a01828" stroke-width="1.1"/>
 <!-- page marker lines -->
 <rect x="566" y="166" width="1" height="6" fill="#c8c8c8"/>
 <rect x="566" y="532" width="1" height="4" fill="#c8c8c8"/>
</svg>

<svg width="697" height="604" style="font-family:'Liberation Sans',sans-serif">
<defs><linearGradient id="tg" x1="0" y1="0" x2="0" y2="1"><stop offset="0" stop-color="#3f8cf8"/><stop offset="0.15" stop-color="#1a64ec"/><stop offset="0.6" stop-color="#0a56e4"/><stop offset="1" stop-color="#0a4cd8"/></linearGradient>
<radialGradient id="cg" cx="0.35" cy="0.35" r="0.8"><stop offset="0" stop-color="#f8b090"/><stop offset="0.6" stop-color="#e0582a"/><stop offset="1" stop-color="#c03c14"/></radialGradient></defs>
<rect x="488" y="172" width="127" height="191" fill="#0a3cd0"/>
<rect x="489" y="173" width="125" height="21" fill="url(#tg)"/>
<rect x="492" y="194" width="119" height="165" fill="#ECE9D8"/>
<text x="492.0" y="188.5" font-size="12" font-weight="bold" fill="#fff" textLength="76" lengthAdjust="spacingAndGlyphs">Калькулятор</text>
<rect x="596.0" y="178.5" width="13" height="13" rx="2" fill="url(#cg)" stroke="#fff" stroke-width="1"/>
<path d="M599.5 182.0l6 6M605.5 182.0l-6 6" stroke="#fff" stroke-width="1.8"/>
<g font-size="11.5" text-anchor="middle" fill="#000">
<text x="504.8" y="210.8">sin</text>
<text x="527.9" y="210.8">cos</text>
<text x="551.0" y="210.8">tan</text>
<text x="574.1" y="210.8">ln</text>
<text x="597.2" y="210.8">log</text>
<text x="504.8" y="233.9">n!</text>
<text x="527.9" y="233.9">i</text>
<text x="551.0" y="233.9">|×|</text>
<text x="551.0" y="257.0"><tspan font-size="14">( )</tspan></text>
<text x="504.8" y="280.1">π</text>
<text x="527.9" y="280.1" font-size="12.5">7</text>
<text x="551.0" y="280.1" font-size="12.5">8</text>
<text x="574.1" y="280.1" font-size="12.5">9</text>

<text x="527.9" y="303.2" font-size="12.5">4</text>
<text x="551.0" y="303.2" font-size="12.5">5</text>
<text x="574.1" y="303.2" font-size="12.5">6</text>


<text x="527.9" y="326.3" font-size="12.5">1</text>
<text x="551.0" y="326.3" font-size="12.5">2</text>
<text x="574.1" y="326.3" font-size="12.5">3</text>
<text x="597.2" y="326.3" font-size="12.5">+</text>

<text x="527.9" y="349.4" font-size="12.5">.</text>
<text x="551.0" y="349.4" font-size="12.5">0</text>
<text x="574.1" y="349.4" font-size="12.5">−</text>
<text x="597.2" y="349.4" font-size="12.5">=</text>
</g>
<path d="M593 296.5l7.5 6.5M600.5 296.5l-7.5 6.5" stroke="#000" stroke-width="1.1"/>
<path d="M598.5 272l-4.5 8.5" stroke="#000" stroke-width="1.2"/>
<path d="M500 322h9" stroke="#000" stroke-width="1.1"/><rect x="503.5" y="317.5" width="2" height="2" fill="#000"/><rect x="503.5" y="324.5" width="2" height="2" fill="#000"/>
<rect x="499" y="342" width="2.5" height="2.5" fill="#000"/><rect x="499" y="346" width="2.5" height="2.5" fill="#000"/><rect x="503" y="342.5" width="7" height="1.6" fill="#000"/><rect x="503" y="346.5" width="7" height="1.6" fill="#000"/>
<path d="M570.5 235v-9h8.5M568.5 232l2 3" fill="none" stroke="#000" stroke-width="1.5"/>
<path d="M595 235v-9h9.5M593 232l2 3" fill="none" stroke="#000" stroke-width="1.5"/><text x="589.5" y="228.5" font-size="6.5" fill="#000">n</text>
<text x="499" y="256.5" font-size="11.5" fill="#000">e</text><text x="505.5" y="251" font-size="8.5" fill="#000">x</text>
<text x="527.8" y="251" font-size="7" font-weight="bold" text-anchor="middle" fill="#000">1</text><rect x="523.5" y="252.2" width="8.5" height="1" fill="#000"/><text x="527.8" y="260" font-size="9.5" text-anchor="middle" fill="#000">x</text>
<path d="M569 249.5l7 7M576 249.5l-7 7" stroke="#000" stroke-width="1"/><text x="577" y="251" font-size="7" fill="#000">2</text>
<path d="M592 249.5l7 7M599 249.5l-7 7" stroke="#000" stroke-width="1"/><text x="600" y="250" font-size="7" fill="#000">Y</text>
<rect x="500" y="296" width="2.5" height="5" fill="#000"/><rect x="505" y="292" width="2" height="2.5" fill="#000"/><rect x="503.5" y="297.5" width="6" height="1" fill="#000"/><rect x="505" y="300.5" width="2" height="4.5" fill="#000"/>
<rect x="525" y="318" width="149" height="213" fill="#0a3cd0"/>
<rect x="526" y="319" width="147" height="21" fill="url(#tg)"/>
<rect x="529" y="340" width="141" height="187" fill="#ECE9D8"/>
<text x="529.0" y="334.5" font-size="12" font-weight="bold" fill="#fff" textLength="60" lengthAdjust="spacingAndGlyphs">Греческая</text>
<rect x="656.0" y="324.0" width="13" height="13" rx="2" fill="url(#cg)" stroke="#fff" stroke-width="1"/>
<path d="M659.5 327.5l6 6M665.5 327.5l-6 6" stroke="#fff" stroke-width="1.8"/>
<rect x="600.5" y="388.5" width="22" height="20" rx="2" fill="#f8f7f2" stroke="#e0ddd0"/><path d="M601.5 408.5h20.5v-19" fill="none" stroke="#c8c4b4"/>
<g font-family="Liberation Serif" font-style="italic" font-size="14" text-anchor="middle" fill="#000">
<text x="541.7" y="357.0">α</text>
<text x="564.7" y="357.0">β</text>
<text x="587.7" y="357.0">γ</text>
<text x="610.7" y="357.0">δ</text>
<text x="633.7" y="357.0">ε</text>
<text x="656.7" y="357.0">ζ</text>
<text x="541.7" y="380.0">η</text>
<text x="564.7" y="380.0">θ</text>
<text x="587.7" y="380.0">ι</text>
<text x="610.7" y="380.0">κ</text>
<text x="633.7" y="380.0">λ</text>
<text x="656.7" y="380.0">μ</text>
<text x="541.7" y="403.0">ν</text>
<text x="564.7" y="403.0">ξ</text>
<text x="587.7" y="403.0">ο</text>
<text x="610.7" y="403.0">π</text>
<text x="633.7" y="403.0">ρ</text>
<text x="656.7" y="403.0">σ</text>
<text x="541.7" y="426.0">τ</text>
<text x="564.7" y="426.0">υ</text>
<text x="587.7" y="426.0">φ</text>
<text x="610.7" y="426.0">χ</text>
<text x="633.7" y="426.0">ψ</text>
<text x="656.7" y="426.0">ω</text>
</g><g font-family="Liberation Serif" font-size="15" text-anchor="middle" fill="#000">
<text x="541.7" y="449.8">Α</text>
<text x="564.7" y="449.8">Β</text>
<text x="587.7" y="449.8">Γ</text>
<text x="610.7" y="449.8">Δ</text>
<text x="633.7" y="449.8">Ε</text>
<text x="656.7" y="449.8">Ζ</text>
<text x="541.7" y="472.8">Η</text>
<text x="564.7" y="472.8">Θ</text>
<text x="587.7" y="472.8">Ι</text>
<text x="610.7" y="472.8">Κ</text>
<text x="633.7" y="472.8">Λ</text>
<text x="656.7" y="472.8">Μ</text>
<text x="541.7" y="495.8">Ν</text>
<text x="564.7" y="495.8">Ξ</text>
<text x="587.7" y="495.8">Ο</text>
<text x="610.7" y="495.8">Π</text>
<text x="633.7" y="495.8">Ρ</text>
<text x="656.7" y="495.8">Σ</text>
<text x="541.7" y="518.8">Τ</text>
<text x="564.7" y="518.8">Υ</text>
<text x="587.7" y="518.8">Φ</text>
<text x="610.7" y="518.8">Χ</text>
<text x="633.7" y="518.8">Ψ</text>
<text x="656.7" y="518.8">Ω</text>
</g>
<rect x="607" y="431.5" width="19" height="16" fill="#8a8878" opacity="0.45"/>
<rect x="605.5" y="429.5" width="18" height="15.5" fill="#fdfde6" stroke="#000"/>
<text x="607.8" y="442" font-size="12" fill="#000" textLength="12.5" lengthAdjust="spacingAndGlyphs">Пи</text>
</svg>
<svg width="697" height="604" style="font-family:'Liberation Sans',sans-serif">
 <defs>
  <linearGradient id="sb" x1="0" y1="0" x2="1" y2="1"><stop offset="0" stop-color="#dfe8fd"/><stop offset="1" stop-color="#b8cbf6"/></linearGradient>
 </defs>
 <!-- vertical scrollbar -->
 <rect x="680" y="166" width="17" height="370" fill="#f5f4ef"/>
 <rect x="681.5" y="168.5" width="14" height="14" rx="1.5" fill="url(#sb)" stroke="#c2d2f4"/>
 <path d="M684.5 178.5l4-4l4 4" fill="none" stroke="#4d6185" stroke-width="2"/>
 <rect x="681.5" y="183.5" width="14" height="16" rx="1.5" fill="url(#sb)" stroke="#b0c4ee"/>
 <path d="M685 188.5h7M685 190.5h7M685 192.5h7M685 194.5h7" stroke="#8ca4dc" stroke-width="1"/>
 <rect x="681.5" y="519.5" width="14" height="14" rx="1.5" fill="url(#sb)" stroke="#c2d2f4"/>
 <path d="M684.5 524.5l4 4l4-4" fill="none" stroke="#4d6185" stroke-width="2"/>
 <!-- horizontal scrollbar -->
 <rect x="2" y="536" width="678" height="16" fill="#f5f4ef"/>
 <rect x="3.5" y="537.5" width="13.5" height="13.5" rx="1.5" fill="url(#sb)" stroke="#c2d2f4"/>
 <path d="M12.5 540.5l-4 4l4 4" fill="none" stroke="#4d6185" stroke-width="2"/>
 <rect x="18.5" y="537.5" width="16.5" height="13.5" rx="1.5" fill="url(#sb)" stroke="#b0c4ee"/>
 <path d="M23.5 541v7M25.5 541v7M27.5 541v7M29.5 541v7" stroke="#8ca4dc" stroke-width="1"/>
 <rect x="664.5" y="536.5" width="14" height="14" rx="1.5" fill="url(#sb)" stroke="#c2d2f4"/>
 <path d="M669.5 539.5l4 4l-4 4" fill="none" stroke="#4d6185" stroke-width="2"/>
 <rect x="680" y="536" width="17" height="16" fill="#ECE9D8"/>
 <!-- bottom bar area -->
 <rect x="0" y="552" width="697" height="30" fill="#ECE9D8"/>
 <!-- trace window -->
 <rect x="2" y="553" width="477" height="28" fill="#fbfbf8"/>
 <rect x="3" y="555" width="458" height="13" fill="#7c98dc"/>
 <text x="5.5" y="565.5" font-size="11" fill="#dfe8fa" textLength="174.5" lengthAdjust="spacingAndGlyphs">Окно трассировки - Безымянный:1</text>
 <path d="M466.5 559l5.5 5M472 559l-5.5 5" stroke="#000" stroke-width="1.9"/>
 <rect x="3" y="569.5" width="472" height="1.5" fill="#707070"/>
 <rect x="3" y="569" width="1.5" height="8" fill="#707070"/>
 <rect x="457" y="573" width="16" height="1.5" fill="#a8c0ec"/><rect x="465" y="571.5" width="1.5" height="4" fill="#5070c0"/>
 <!-- eval toolbar -->
 <rect x="482" y="556" width="1" height="23" fill="#fff"/><rect x="484" y="556" width="1" height="23" fill="#c5c1ad"/><rect x="482" y="578" width="3" height="1" fill="#c5c1ad"/>
 <rect x="479" y="553" width="1" height="29" fill="#8a887e"/>
 <rect x="480" y="553" width="217" height="1" fill="#fff"/>
 <rect x="480" y="581" width="217" height="1" fill="#aca899"/>
 <g font-family="Liberation Serif" font-size="14" fill="#000">
  <text x="609.5" y="570.5">f x</text>
  <text x="631.5" y="570.5">x f</text>
  <text x="653.5" y="570.5">xfy</text>
  <text x="676.5" y="573">x</text><text x="683" y="567.5" font-size="13">f</text><text x="687" y="572">y</text>
 </g>
 <rect x="497" y="564.5" width="8.5" height="1.3" fill="#000"/><rect x="497" y="568.5" width="8.5" height="1.3" fill="#000"/>
 <rect x="518.5" y="564" width="2" height="2" fill="#000"/><rect x="518.5" y="568" width="2" height="2" fill="#000"/><rect x="522" y="564.5" width="7.5" height="1.3" fill="#000"/><rect x="522" y="568.5" width="7.5" height="1.3" fill="#000"/>
 <rect x="542.5" y="563.5" width="8.5" height="1.3" fill="#000"/><rect x="542.5" y="566.5" width="8.5" height="1.3" fill="#000"/><rect x="542.5" y="569.5" width="8.5" height="1.3" fill="#000"/>
 <path d="M565 567h9M571 564l3 3l-3 3" fill="none" stroke="#000" stroke-width="1.2"/>
 <rect x="586" y="565.5" width="3" height="3" fill="#000"/><path d="M590 567h9M596 564l3 3l-3 3" fill="none" stroke="#000" stroke-width="1.2"/>
 <!-- status bar -->
 <rect x="0" y="582" width="697" height="1" fill="#aca899"/>
 <rect x="0" y="583" width="697" height="18" fill="#ECE9D8"/>
 <g font-size="11" fill="#000">
  <text x="1.5" y="597" textLength="129" lengthAdjust="spacingAndGlyphs">Нажмите F1 для справки.</text>
  <text x="503.5" y="597">Авто</text>
  <text x="570" y="597" textLength="22.5" lengthAdjust="spacingAndGlyphs">NUM</text>
  <text x="600" y="597" textLength="58" lengthAdjust="spacingAndGlyphs">Страница 1</text>
 </g>
 <g fill="#c5c1ad"><rect x="533" y="585" width="1" height="15"/><rect x="565" y="585" width="1" height="15"/><rect x="595" y="585" width="1" height="15"/><rect x="678" y="585" width="1" height="15"/></g>
 <g fill="#fff"><rect x="534" y="585" width="1" height="15"/><rect x="566" y="585" width="1" height="15"/><rect x="596" y="585" width="1" height="15"/><rect x="679" y="585" width="1" height="15"/></g>
 <g fill="#b8b4a0"><rect x="692" y="590" width="2" height="2"/><rect x="689" y="593" width="2" height="2"/><rect x="692" y="593" width="2" height="2"/><rect x="686" y="596" width="2" height="2"/><rect x="689" y="596" width="2" height="2"/><rect x="692" y="596" width="2" height="2"/></g>
 <rect x="0" y="601" width="697" height="3" fill="#0b4fdf"/>
</svg>

</body></html>
